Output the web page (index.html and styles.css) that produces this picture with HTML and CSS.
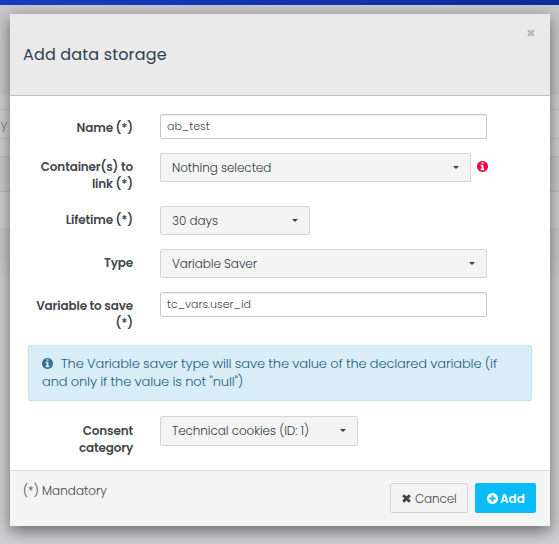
FILE: index.html
```html
<!DOCTYPE html>
<html lang="en">
<head>
<meta charset="utf-8">
<title>Add data storage</title>
<link rel="stylesheet" href="styles.css">
</head>
<body>
<svg class="defs" aria-hidden="true">
  <symbol id="info" viewBox="0 128 1536 1536"><path d="M1024 1376v-160q0-14-9-23t-23-9h-96v-512q0-14-9-23t-23-9h-320q-14 0-23 9t-9 23v160q0 14 9 23t23 9h96v320h-96q-14 0-23 9t-9 23v160q0 14 9 23t23 9h448q14 0 23-9t9-23zm-128-896v-160q0-14-9-23t-23-9h-192q-14 0-23 9t-9 23v160q0 14 9 23t23 9h192q14 0 23-9t9-23zm640 416q0 209-103 385.5t-279.5 279.5-385.5 103-385.5-103-279.5-279.5-103-385.5 103-385.5 279.5-279.5 385.5-103 385.5 103 279.5 279.5 103 385.5z"/></symbol>
  <symbol id="cross" viewBox="0 0 10 10"><path d="M1.3 1.3l7.4 7.4M8.7 1.3L1.3 8.7" fill="none" stroke="currentColor" stroke-width="3.2"/></symbol>
  <symbol id="plus" viewBox="0 0 12 12"><path fill-rule="evenodd" d="M6 0a6 6 0 1 1 0 12A6 6 0 0 1 6 0zM5 2.5V5H2.5v2H5v2.5h2V7h2.5V5H7V2.5z"/></symbol>
</svg>
<div class="page">
  <div class="topbar"></div>
  <div class="subhead"></div>
  <div class="strip"></div>
  <div class="search">ly</div>
  <div class="line"></div>
  <div class="line shaded"></div>
  <div class="line tall"></div>
  <div class="band"></div>
  <div class="strip end"></div>
</div>
<div class="modal">
  <header class="head">
    <h1 class="title">Add data storage</h1>
    <svg class="close"><use href="#cross"/></svg>
  </header>
  <form class="body">
    <div class="row short">
      <label class="label">Name (*)</label>
      <div class="input">ab_test</div>
    </div>
    <div class="row high">
      <label class="label">Container(s) to<br>link (*)</label>
      <div class="select square w-cont"><span>Nothing selected</span><i class="caret"></i></div>
      <svg class="required"><use href="#info"/></svg>
    </div>
    <div class="row">
      <label class="label">Lifetime (*)</label>
      <div class="select w-life"><span>30 days</span><i class="caret"></i></div>
    </div>
    <div class="row">
      <label class="label">Type</label>
      <div class="select w-type"><span>Variable Saver</span><i class="caret"></i></div>
    </div>
    <div class="row high">
      <label class="label">Variable to save<br>(*)</label>
      <div class="input">tc_vars.user_id</div>
    </div>
    <div class="alert">
      <svg class="note"><use href="#info"/></svg>The Variable saver type will save the value of the declared variable (if<br>and only if the value is not "null")
    </div>
    <div class="row consent">
      <label class="label">Consent<br>category</label>
      <div class="select w-cons"><span>Technical cookies (ID: 1)</span><i class="caret"></i></div>
    </div>
  </form>
  <footer class="foot">
    <span class="mandatory">(*) Mandatory</span>
    <div class="btn cancel"><svg class="x"><use href="#cross"/></svg>Cancel</div>
    <div class="btn add"><svg class="p"><use href="#plus"/></svg>Add</div>
  </footer>
</div>
</body>
</html>
```
FILE: styles.css
```css
* { box-sizing: border-box; }
body {
  margin: 0;
  width: 559px;
  height: 544px;
  overflow: hidden;
  background: #d0d0d2;
  color: #444;
  font: 300 12px/17px Poppins, "Open Sans", sans-serif;
  white-space: nowrap;
}
.defs { position: absolute; width: 0; height: 0; }
svg { fill: currentColor; flex: none; }

.page { position: absolute; inset: 0; }
.topbar { height: 5px; background: linear-gradient(90deg, #173dc4, #0b2d9f); }
.subhead { height: 90px; background: #c9c9cc; }
.strip { height: 14px; background: #d0d0d0; }
.search { height: 30px; border: 1px solid #bdbdbd; border-width: 1px 0; color: #777; padding-top: 6px; text-indent: -2px; background: #d2d2d2; }
.line { height: 18px; background: #d0d0d0; border-bottom: 1px solid #c0c0c0; }
.shaded { height: 35px; background: #cbcbcb; }
.tall { height: 36px; border: 0; background: #d0d0d0; }
.band { height: 34px; background: #c9c9c9; }
.end { height: 15px; background: #cdcdcd; }

.modal {
  position: absolute;
  left: 10px;
  top: 14px;
  width: 540px;
  height: 512px;
  display: flex;
  flex-direction: column;
  background: #fff;
  box-shadow: 0 5px 15px rgba(0, 0, 0, .5);
}
.head {
  height: 82px;
  padding: 0 15px 0 13px;
  display: flex;
  align-items: center;
  justify-content: space-between;
  background: #eaeaea;
  border-bottom: 1px solid #bfc0c1;
}
.title { margin: 0; font-size: 16px; line-height: 24px; font-weight: 400; letter-spacing: .16px; color: #2f4050; }
.close { width: 8px; height: 8px; margin-bottom: 43px; color: #b9b9b9; }

.body { padding: 18px 18px 0; height: 374px; }
.row { display: flex; align-items: flex-start; height: 43px; }
.short { height: 39px; }
.high { height: 53px; }
.label { width: 105px; padding-top: 5px; margin-right: 27px; text-align: right; font-weight: 600; letter-spacing: -.15px; color: #43474c; }
.input {
  width: 327px;
  height: 25px;
  padding: 3px 6px;
  border: 1px solid #c8c8c8;
  border-radius: 2px;
  box-shadow: inset 0 1px 1px rgba(0, 0, 0, .075);
  font-size: 11px;
}
.select {
  height: 29px;
  padding: 0 11px;
  display: flex;
  align-items: center;
  justify-content: space-between;
  background: #f4f4f4;
  border: 1px solid #d5d5d5;
  border-radius: 2px;
  letter-spacing: -.08px;
  color: #333a45;
}
.select span { margin-bottom: 1px; }
.square { border-radius: 0; }
.caret { border: 3px solid transparent; border-top-color: #2f4050; border-bottom: 0; }
.w-cont { width: 311px; }
.w-life { width: 150px; }
.w-type { width: 327px; }
.w-cons { width: 198px; height: 30px; }
.w-cons .caret { margin-bottom: 1px; }
.required { width: 11px; height: 11px; margin: 8px 0 0 6px; color: #ef003c; }

.alert {
  width: 504px;
  height: 56px;
  margin-bottom: 15px;
  padding: 9px 13px;
  border: 1px solid #bce8f1;
  border-radius: 2px;
  background: #d9edf7;
  color: #21607f;
  font-size: 13px;
  line-height: 18px;
  letter-spacing: -.14px;
}
.note { width: 11px; height: 11px; margin-right: 8px; vertical-align: -1px; color: #31708f; }
.consent .label { padding-top: 6px; }

.foot {
  height: 56px;
  padding: 12px 14px 0 13px;
  display: flex;
  align-items: flex-start;
  background: #f4f4f4;
  border-top: 1px solid #d9d9d9;
}
.mandatory { margin: -1px auto 0 0; }
.btn { height: 30px; display: flex; align-items: center; border-radius: 2px; }
.cancel { width: 78px; padding-left: 11px; border: 1px solid #d3d3d3; margin-right: 7px; letter-spacing: -.15px; }
.add { width: 61px; padding-left: 12px; background: #09bcf7; color: #fff; font-weight: 600; }
.x { width: 9px; height: 9px; margin-right: 4px; }
.p { width: 11px; height: 11px; margin-right: 2px; }
```
